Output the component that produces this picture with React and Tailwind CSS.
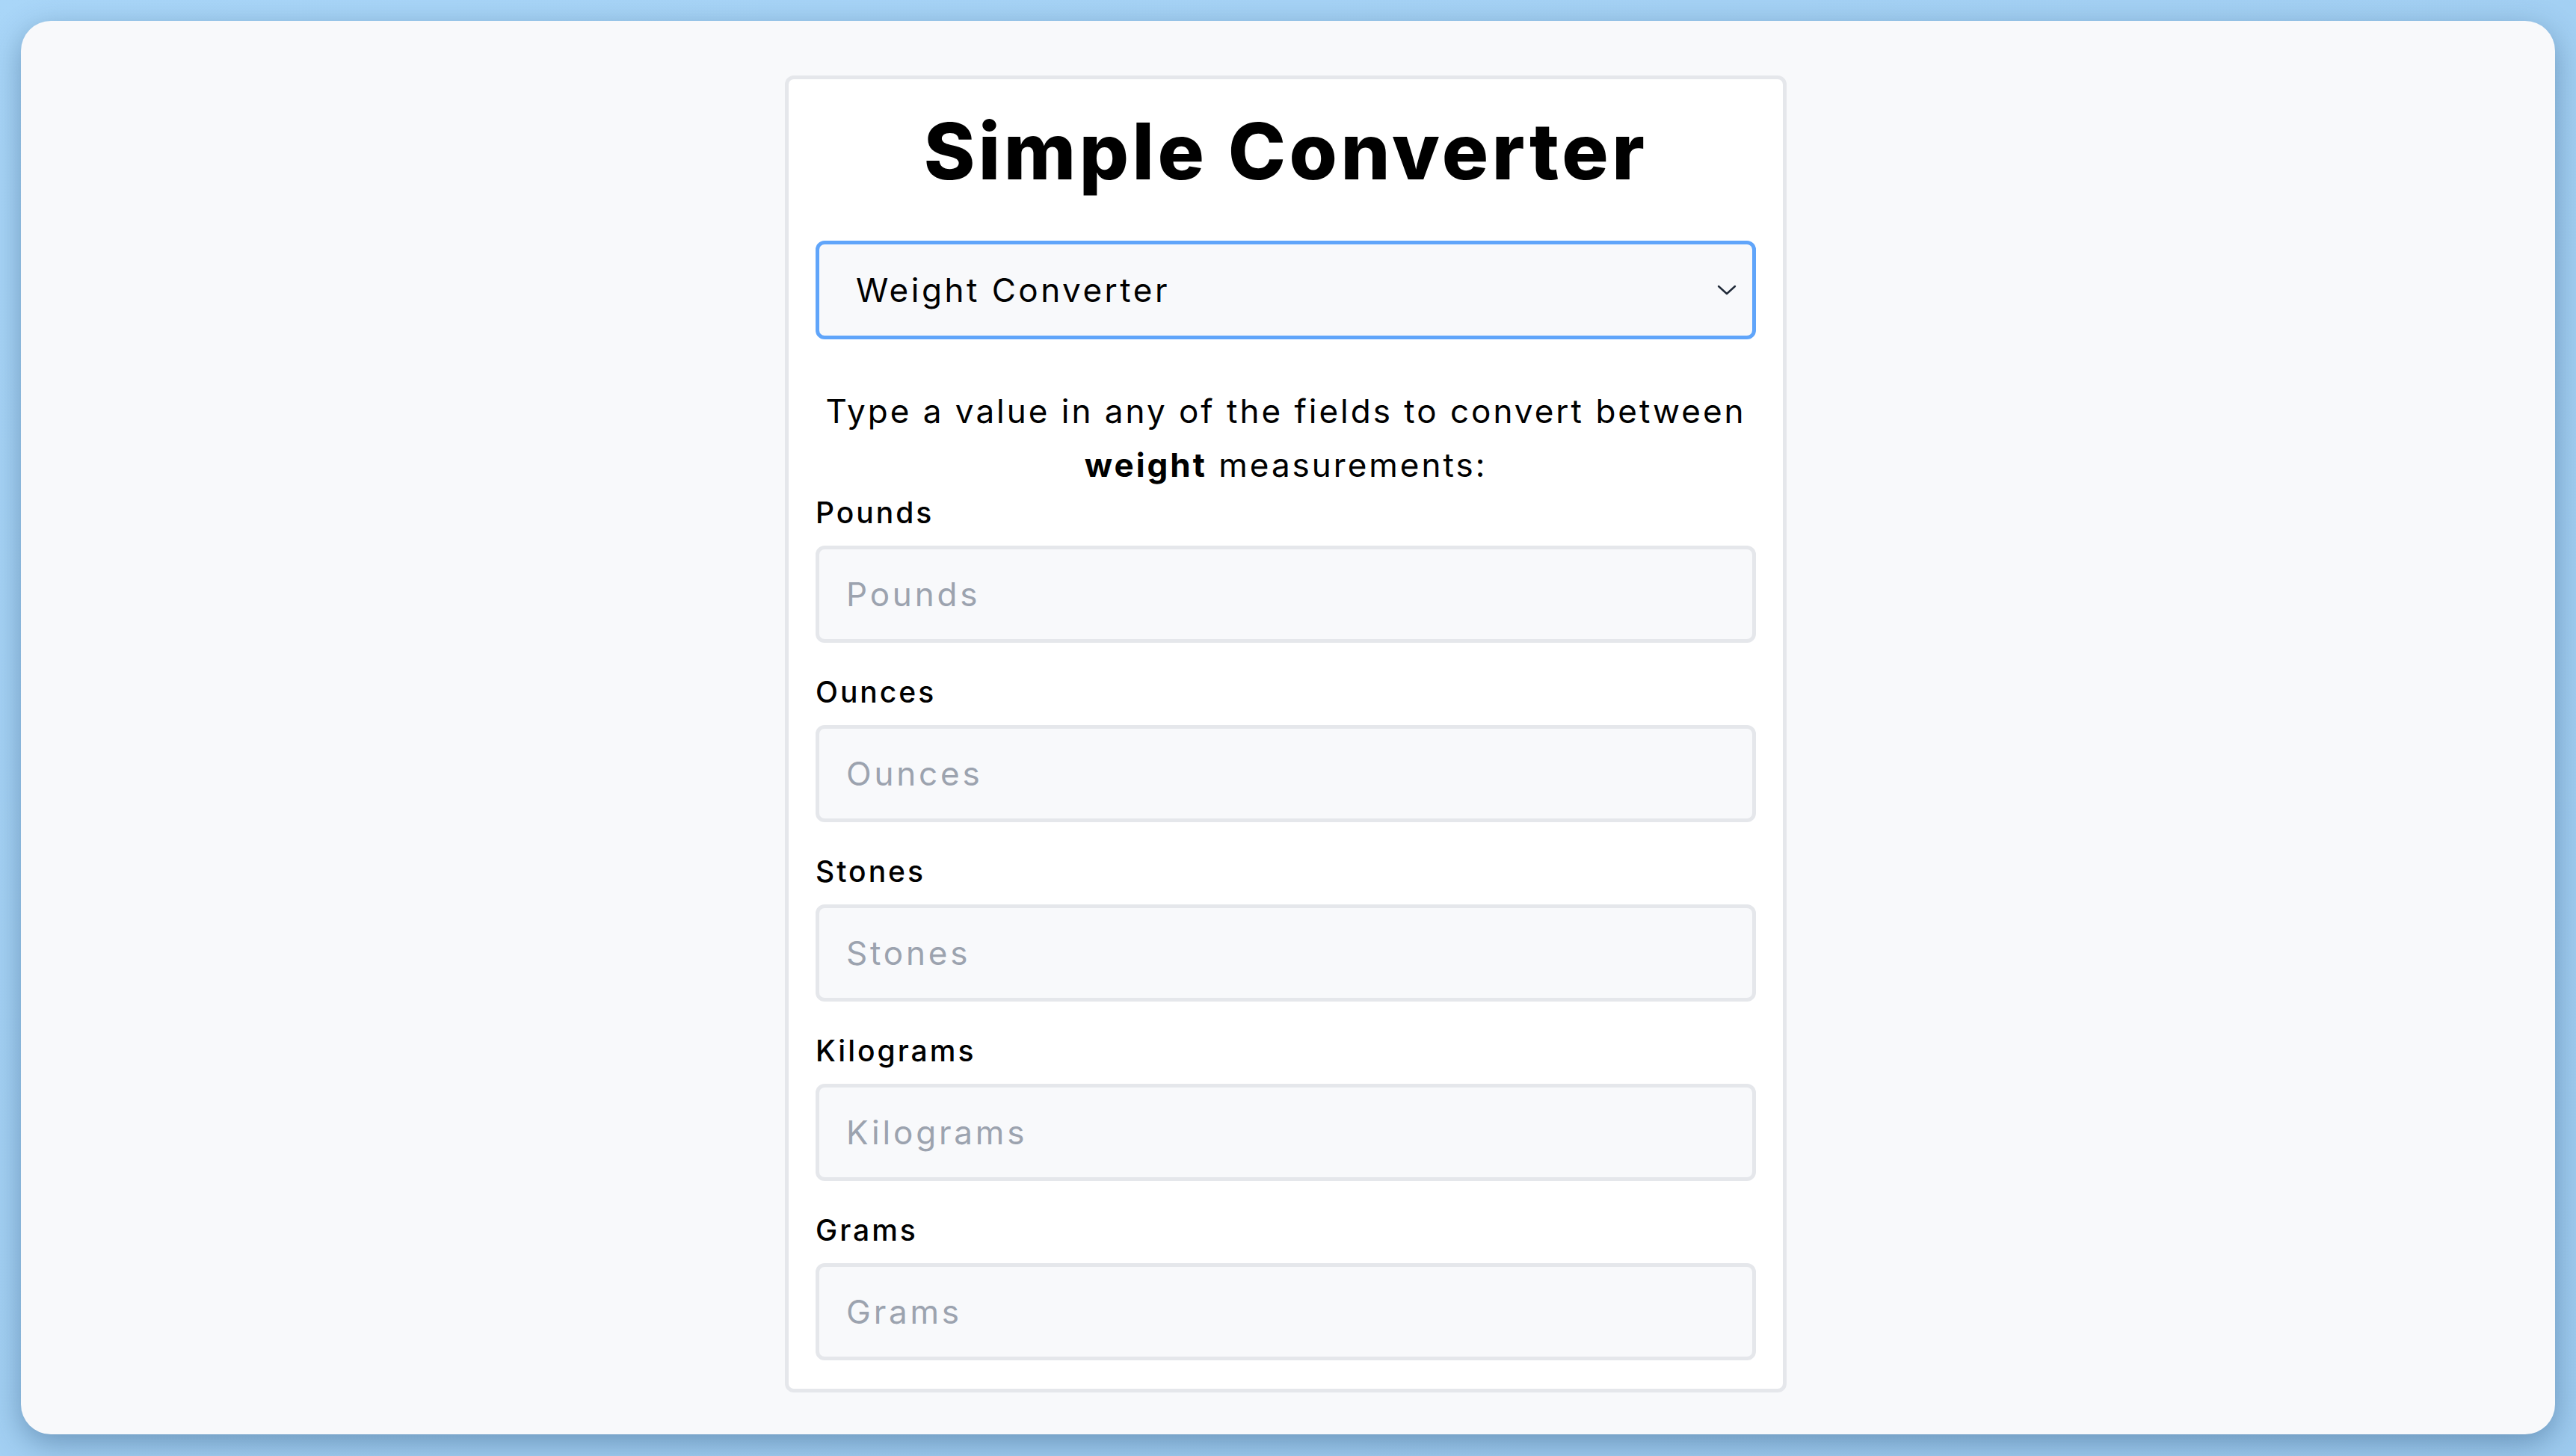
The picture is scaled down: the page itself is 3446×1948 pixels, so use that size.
const fields = ["Pounds", "Ounces", "Stones", "Kilograms", "Grams"];

function Chevron() {
  return (
    <svg
      className="pointer-events-none absolute right-[26px] top-1/2 -translate-y-1/2"
      width="26"
      height="14"
      viewBox="0 0 26 14"
      fill="none"
    >
      <path d="M2 2 L13 12 L24 2" stroke="#1f2937" strokeWidth="2.4" strokeLinecap="round" strokeLinejoin="round" />
    </svg>
  );
}

function Field({ name }) {
  return (
    <div className="mb-[38px]">
      <label className="block text-[39px] leading-[56px] font-medium text-black tracking-[3px]">{name}</label>
      <input
        type="text"
        placeholder={name}
        className="mt-[16px] block w-full h-[130px] rounded-[12px] border-[5px] border-[#e5e7eb] bg-[#f8f9fb] px-[36px] text-[44px] tracking-[3.8px] text-black placeholder:text-[#9ca3af] outline-none"
      />
    </div>
  );
}

export default function App() {
  return (
    <div
      className="min-h-screen p-[28px] bg-gradient-to-br from-[#a9d6f8] via-[#a3d0f3] to-[#9ecbef]"
      style={{ fontFamily: "Inter, 'Open Sans', sans-serif" }}
    >
      <div className="h-[1891px] rounded-[40px] bg-[#f8f9fb] shadow-[0_12px_40px_rgba(40,80,120,0.45)] flex justify-center pr-[6px]">
        <div className="mt-[73px] self-start w-[1340px] rounded-[12px] border-[5px] border-[#e5e7eb] bg-white px-[36px] pt-[36px]">
          <h1 className="text-center text-[104px] leading-[120px] font-extrabold text-black tracking-[4.5px]">
            Simple Converter
          </h1>
          <div className="relative mt-[60px]">
            <select className="block w-full h-[132px] appearance-none rounded-[12px] border-[5px] border-[#60a5fa] bg-[#f8f9fb] pl-[49px] pr-[80px] text-[44px] tracking-[3.5px] text-black outline-none">
              <option>Weight Converter</option>
            </select>
            <Chevron />
          </div>
          <p className="mt-[60px] text-center text-[44px] leading-[72px] tracking-[3px] text-black">
            Type a value in any of the fields to convert between <b className="font-bold">weight</b> measurements:
          </p>
          {fields.map((f) => (
            <Field key={f} name={f} />
          ))}
        </div>
      </div>
    </div>
  );
}
